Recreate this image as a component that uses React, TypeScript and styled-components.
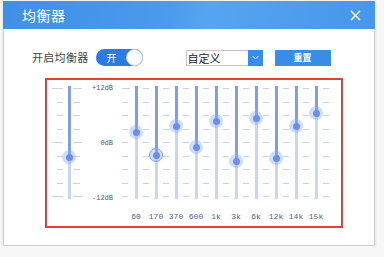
import React from "react";
import styled, { createGlobalStyle } from "styled-components";

const GlobalStyle = createGlobalStyle`
  html, body { margin: 0; padding: 0; background: #f7f7f7; }
  body { font-family: "Noto Sans CJK SC", "Noto Sans", sans-serif; }
`;

const Dialog = styled.div`
  margin: 1px 0 0 3px;
  width: 372px;
  height: 245px;
  box-sizing: border-box;
  background: #fff;
  border: 1px solid #cdcdcd;
  border-top: none;
  box-shadow: 0 1px 3px rgba(0, 0, 0, 0.12);
`;

const TitleBar = styled.div`
  height: 28px;
  margin: 0 -1px;
  padding: 0 14px 0 19px;
  display: flex;
  align-items: center;
  justify-content: space-between;
  background: linear-gradient(100deg, #3f90e7 0%, #4a9bed 45%, #56a5f1 55%, #4696ea 100%);
`;

const Title = styled.div`
  color: #fff;
  font-size: 14px;
  line-height: 28px;
  letter-spacing: 0.5px;
`;

const ControlRow = styled.div`
  margin-top: 20px;
  height: 17px;
  display: flex;
  align-items: center;
  padding-left: 28px;
`;

const Label = styled.div`
  font-size: 11px;
  letter-spacing: 0.3px;
  color: #444;
  line-height: 17px;
`;

const Toggle = styled.div`
  margin-left: 7px;
  width: 47px;
  height: 17px;
  border-radius: 9px;
  background: #2a7ce0;
  display: flex;
  align-items: center;
  justify-content: space-between;
  padding-left: 11px;
  box-sizing: border-box;
`;

const ToggleText = styled.span`
  color: #fff;
  font-size: 10px;
  line-height: 17px;
`;

const ToggleKnob = styled.span`
  width: 17px;
  height: 17px;
  border-radius: 50%;
  background: #fff;
  box-sizing: border-box;
  border: 1px solid #c8c8c8;
`;

const Select = styled.div`
  margin-left: 43px;
  width: 77px;
  height: 16px;
  display: flex;
  box-sizing: border-box;
  border: 1px solid #c4c4c4;
  background: #fff;
`;

const SelectText = styled.div`
  flex: 1;
  font-size: 11px;
  line-height: 14px;
  color: #222;
  padding-left: 1px;
`;

const SelectArrow = styled.div`
  width: 15px;
  margin: -1px -1px -1px 0;
  background: #3a8ce8;
  display: flex;
  align-items: center;
  justify-content: center;
`;

const ResetButton = styled.div`
  margin-left: 12px;
  width: 56px;
  height: 16px;
  background: #3a8ce8;
  color: #fff;
  font-size: 9px;
  line-height: 16px;
  text-align: center;
  font-weight: bold;
`;

const EqBox = styled.div`
  margin: 12px 0 0 41px;
  width: 298px;
  height: 150px;
  box-sizing: border-box;
  border: 2px solid #e2403f;
  padding-top: 6px;
`;

const EqRow = styled.div`
  height: 113px;
  display: flex;
`;

const TickCol = styled.div<{ $w: number; $align: "flex-start" | "center" | "flex-end"; $pl?: number; $pr?: number }>`
  width: ${(p) => p.$w}px;
  flex: none;
  box-sizing: border-box;
  display: flex;
  flex-direction: column;
  justify-content: space-between;
  align-items: ${(p) => p.$align};
  padding: 2px ${(p) => p.$pr ?? 0}px 2px ${(p) => p.$pl ?? 0}px;
`;

const Dash = styled.div<{ $w: number }>`
  width: ${(p) => p.$w}px;
  height: 1px;
  background: #c5d1ee;
`;

const Slider = styled.div`
  position: relative;
  width: 8px;
  flex: none;
  display: flex;
  flex-direction: column;
  align-items: center;
`;

const TrackUpper = styled.div`
  width: 3px;
  background: #7e9eec;
`;

const TrackLower = styled.div`
  width: 3px;
  flex: 1;
  background: #c7d5f6;
`;

const Knob = styled.div<{ $ring?: boolean }>`
  position: absolute;
  left: 50%;
  width: 14px;
  height: 14px;
  margin: -7px 0 0 -7px;
  border-radius: 50%;
  box-sizing: border-box;
  background: rgba(140, 172, 242, 0.42);
  border: ${(p) => (p.$ring ? "1px solid #7f9deb" : "none")};
  display: flex;
  align-items: center;
  justify-content: center;
`;

const KnobDot = styled.div`
  width: 7px;
  height: 7px;
  border-radius: 50%;
  background: #6b8ee9;
`;

const DbCol = styled.div`
  width: 31px;
  height: 120px;
  margin-top: -3px;
  flex: none;
  display: flex;
  flex-direction: column;
  justify-content: space-between;
  align-items: flex-end;
  padding-right: 1px;
  box-sizing: border-box;
`;

const DbLabel = styled.div`
  font-family: "Liberation Mono", monospace;
  font-size: 7px;
  line-height: 10px;
  height: 10px;
  color: #45557f;
`;

const FreqRow = styled.div`
  display: flex;
  margin-top: 13px;
  padding-left: 79px;
`;

const FreqLabel = styled.div`
  width: 20px;
  flex: none;
  text-align: center;
  font-family: "Liberation Mono", monospace;
  font-size: 8px;
  line-height: 10px;
  color: #4b5e93;
`;

const TOP = 86;
const ROWS = 9;

const Ticks: React.FC<{ w: number; align: "flex-start" | "center" | "flex-end"; long: number; short: number; pl?: number; pr?: number; longRows?: number[] }> = ({
  w,
  align,
  long,
  short,
  pl,
  pr,
  longRows = [0, 4, 8],
}) => (
  <TickCol $w={w} $align={align} $pl={pl} $pr={pr}>
    {Array.from({ length: ROWS }, (_, i) => (
      <Dash key={i} $w={longRows.includes(i) ? long : short} />
    ))}
  </TickCol>
);

const EqSlider: React.FC<{ y: number; ring?: boolean }> = ({ y, ring }) => (
  <Slider>
    <TrackUpper style={{ height: y - TOP }} />
    <TrackLower />
    <Knob $ring={ring} style={{ top: y - TOP }}>
      <KnobDot />
    </Knob>
  </Slider>
);

const bands = [
  { f: "60", y: 132 },
  { f: "170", y: 155, ring: true },
  { f: "370", y: 126 },
  { f: "600", y: 147 },
  { f: "1k", y: 121 },
  { f: "3k", y: 161 },
  { f: "6k", y: 118 },
  { f: "12k", y: 158 },
  { f: "14k", y: 126 },
  { f: "15k", y: 113 },
];

export default function App() {
  return (
    <>
      <GlobalStyle />
      <Dialog>
        <TitleBar>
          <Title>均衡器</Title>
          <svg width="11" height="11" viewBox="0 0 11 11">
            <path d="M1 1 L10 10 M10 1 L1 10" stroke="#fff" strokeWidth="1.4" fill="none" />
          </svg>
        </TitleBar>
        <ControlRow>
          <Label>开启均衡器</Label>
          <Toggle>
            <ToggleText>开</ToggleText>
            <ToggleKnob />
          </Toggle>
          <Select>
            <SelectText>自定义</SelectText>
            <SelectArrow>
              <svg width="7" height="5" viewBox="0 0 7 5">
                <path d="M0.5 1 L3.5 4 L6.5 1" stroke="#d8e8fb" strokeWidth="1" fill="none" />
              </svg>
            </SelectArrow>
          </Select>
          <ResetButton>重置</ResetButton>
        </ControlRow>
        <EqBox>
          <EqRow>
            <Ticks w={18} align="flex-end" long={11} short={6} pr={2} />
            <EqSlider y={157} />
            <Ticks w={10} align="flex-start" long={9} short={7} />
            <DbCol>
              <DbLabel>+12dB</DbLabel>
              <DbLabel>0dB</DbLabel>
              <DbLabel>-12dB</DbLabel>
            </DbCol>
            <Ticks w={18} align="flex-start" long={8} short={6} pl={8} longRows={[0]} />
            {bands.map((b) => (
              <React.Fragment key={b.f}>
                <EqSlider y={b.y} ring={b.ring} />
                <Ticks w={12} align="center" long={6} short={6} />
              </React.Fragment>
            ))}
          </EqRow>
          <FreqRow>
            {bands.map((b) => (
              <FreqLabel key={b.f}>{b.f}</FreqLabel>
            ))}
          </FreqRow>
        </EqBox>
      </Dialog>
    </>
  );
}
